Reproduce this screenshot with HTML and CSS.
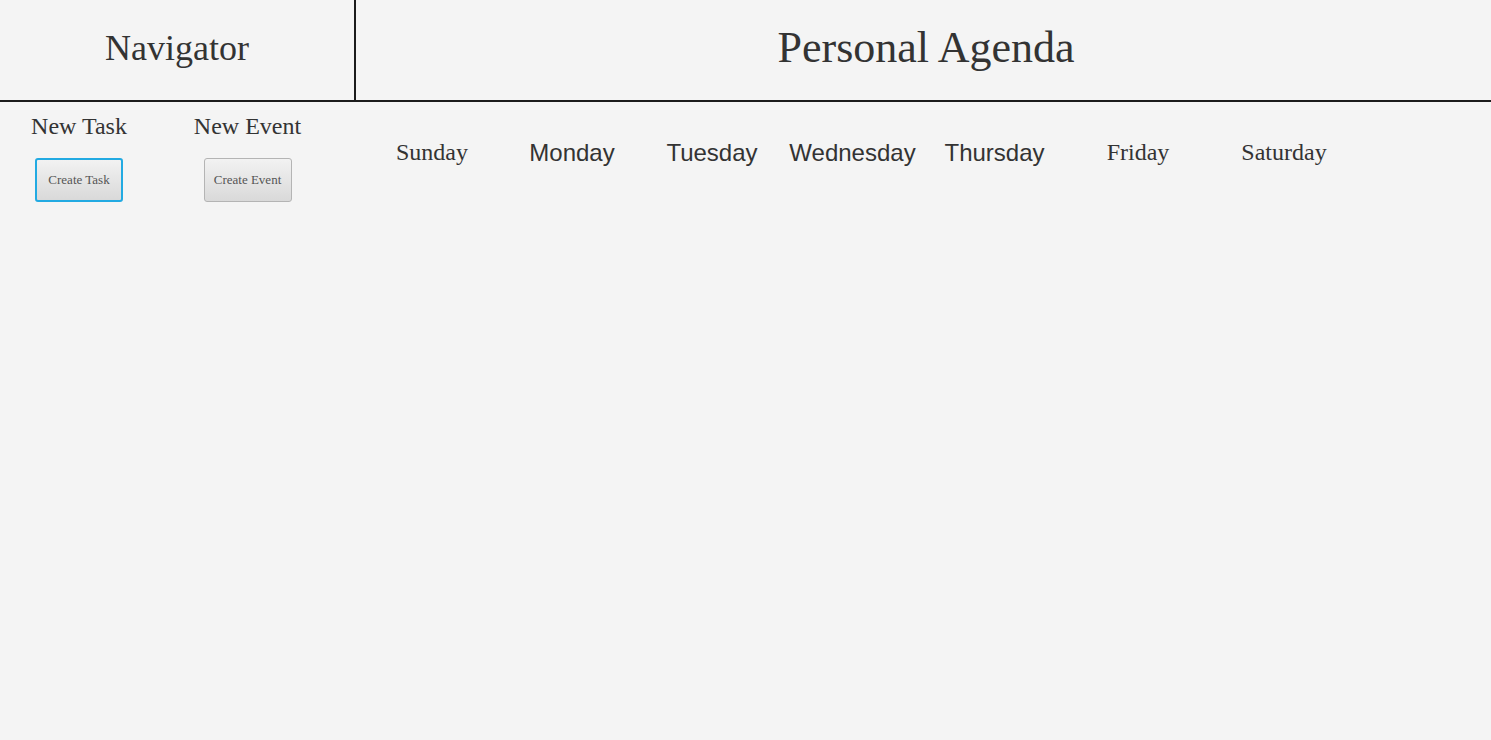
FILE: index.html
```html
<!DOCTYPE html>
<html lang="en">

<head>
    <meta charset="UTF-8">
    <meta name="viewport" content="width=device-width, initial-scale=1.0">
    <title>Personal Agenda</title>
    <link rel="stylesheet" href="styles.css">
</head>

<body>
    <div class="header">
        <div class="nav-title">Navigator</div>
        <div class="agenda-title">Personal Agenda</div>
    </div>

    <div class="content">
        <div class="sidebar">
            <div class="action">
                <div class="action-label">New Task</div>
                <button class="btn focused">Create Task</button>
            </div>
            <div class="action">
                <div class="action-label">New Event</div>
                <button class="btn">Create Event</button>
            </div>
        </div>

        <div class="week">
            <div class="day serif">Sunday</div>
            <div class="day sans">Monday</div>
            <div class="day sans">Tuesday</div>
            <div class="day sans">Wednesday</div>
            <div class="day sans">Thursday</div>
            <div class="day serif">Friday</div>
            <div class="day serif">Saturday</div>
        </div>
    </div>
</body>

</html>
```

FILE: styles.css
```css
body {
    margin: 0;
    background-color: #f4f4f4;
    color: #333;
    font-family: "Liberation Serif", serif;
}

/* ust baslik */
.header {
    display: flex;
    height: 100px;
    border-bottom: 2px solid #1c1c1c;
}

.nav-title {
    width: 354px;
    border-right: 2px solid #1c1c1c;
    display: flex;
    justify-content: center;
    align-items: center;
    padding-bottom: 4px;
    font-size: 36px;
}

.agenda-title {
    flex: 1;
    display: flex;
    justify-content: center;
    align-items: center;
    padding-bottom: 5px;
    padding-left: 5px;
    font-size: 44px;
}

.content {
    display: flex;
}

/* sol panel */
.sidebar {
    width: 356px;
    display: grid;
    grid-template-columns: 158px 179px;
    align-content: start;
    padding-top: 11px;
}

.action {
    display: flex;
    flex-direction: column;
    align-items: center;
    gap: 18px;
}

.action-label {
    font-size: 24px;
}

.btn {
    width: 88px;
    height: 44px;
    border: 1px solid #b4b4b4;
    border-radius: 3px;
    background: linear-gradient(#f2f2f2, #d9d9d9);
    font-family: "Liberation Serif", serif;
    font-size: 13px;
    color: #555;
    padding: 0 0 1px;
}

.btn.focused {
    border: 2px solid #22aae2;
}

/* hafta gunleri */
.week {
    display: grid;
    grid-template-columns: 140px 140px 140px 141px 143px 144px 148px;
    align-content: start;
    padding-left: 6px;
    padding-top: 37px;
}

.day {
    text-align: center;
    font-size: 24px;
    white-space: nowrap;
}

.day.serif {
    font-family: "Liberation Serif", serif;
}

.day.sans {
    font-family: "Liberation Sans", sans-serif;
}
```
